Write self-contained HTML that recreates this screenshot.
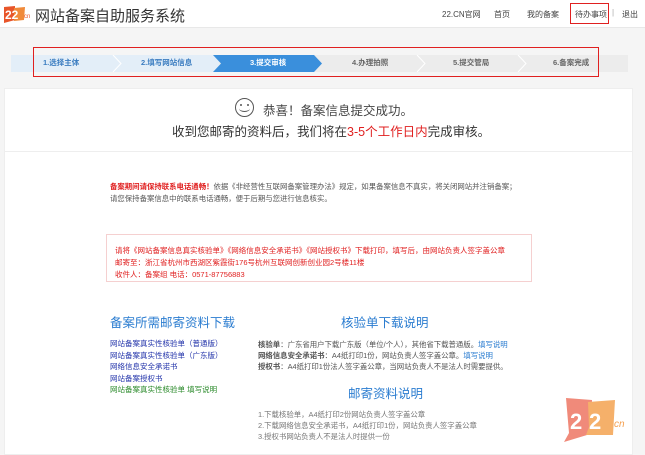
<!DOCTYPE html><html><head><meta charset="utf-8"><style>
*{margin:0;padding:0;box-sizing:border-box}
body{width:645px;height:455px;overflow:hidden;background:#f5f5f5;font-family:"Liberation Sans","Noto Sans CJK SC",sans-serif;position:relative;color:#666}
.a{position:absolute;white-space:nowrap}
.hdr{position:absolute;left:0;top:0;width:645px;height:28px;background:#fff;border-bottom:1px solid #e8e8e8}
.nav{font-size:8px;color:#444}
.step{position:absolute;top:54px;height:18px;font-size:7.5px;line-height:18px;font-weight:bold}
.box{position:absolute;left:4px;top:88px;width:629px;height:367px;background:#fff;border:1px solid #eee}
.red{color:#e02020}
.f7{font-size:7.4px}
.blue{color:#2a7cd0}
.lk{color:#2233aa;font-size:7.5px}
</style></head><body>
<div class="hdr"></div>
<svg class="a" style="left:3px;top:5px" width="30" height="19"><polygon points="1,2 12,1 12,15 1,18" fill="#e8552a"/><polygon points="11,3 22,2 21,15 11,16" fill="#f08a3a"/>
<text x="2" y="14" font-size="12" font-weight="bold" fill="#fff" font-family="Liberation Sans">22</text><text x="21" y="13" font-size="6" fill="#e8552a" font-family="Liberation Sans">cn</text></svg>
<div class="a" style="left:35px;top:5px;font-size:15px;color:#333">网站备案自助服务系统</div>
<div class="a nav" style="left:442px;top:9px">22.CN官网</div>
<div class="a nav" style="left:494px;top:9px">首页</div>
<div class="a nav" style="left:527px;top:9px">我的备案</div>
<div class="a nav" style="left:575px;top:9px">待办事项</div>
<div class="a" style="left:570px;top:3px;width:39px;height:21px;border:1.5px solid #e02020"></div>
<div class="a nav" style="left:612px;top:8px;color:#aaa">|</div>
<div class="a nav" style="left:622px;top:9px">退出</div>
<div class="a" style="left:11px;top:55px;width:617px;height:17px;background:#ececec"></div>
<div class="a" style="left:11px;top:55px;width:208px;height:17px;background:#e3eef8"></div>
<svg class="a" style="left:0;top:55px" width="645" height="17"><polygon points="213,0 314,0 322,8.5 314,17 213,17 221,8.5" fill="#3a8fdc"/>
<g fill="none" stroke="#fff" stroke-width="1"><polyline points="113,0 121,8.5 113,17"/><polyline points="417,0 425,8.5 417,17"/><polyline points="518,0 526,8.5 518,17"/></g></svg>
<div class="step" style="left:43px;color:#3a7cc0">1.选择主体</div>
<div class="step" style="left:141px;color:#3a7cc0">2.填写网站信息</div>
<div class="step" style="left:250px;color:#fff">3.提交审核</div>
<div class="step" style="left:352px;color:#666">4.办理拍照</div>
<div class="step" style="left:453px;color:#666">5.提交管局</div>
<div class="step" style="left:553px;color:#666">6.备案完成</div>
<div class="a" style="left:33px;top:47px;width:566px;height:30px;border:1.5px solid #e02020"></div>
<div class="box"></div>
<div class="a" style="left:4px;top:151px;width:629px;height:1px;background:#eee"></div>
<div class="a" style="left:235px;top:98px;width:19px;height:19px;border:1.3px solid #555;border-radius:50%"></div>
<div class="a" style="left:240px;top:104px;width:2px;height:2px;background:#555;border-radius:50%"></div>
<div class="a" style="left:247px;top:104px;width:2px;height:2px;background:#555;border-radius:50%"></div>
<div class="a" style="left:239px;top:105px;width:11px;height:7px;border-bottom:1.2px solid #555;border-radius:0 0 50% 50%"></div>
<div class="a" style="left:263px;top:100px;font-size:12.5px;color:#444">恭喜！备案信息提交成功。</div>
<div class="a" style="left:172px;top:121px;font-size:12.5px;color:#333">收到您邮寄的资料后，我们将在<span class="red">3-5个工作日内</span>完成审核。</div>
<div class="a f7" style="left:110px;top:181px;color:#555"><span class="red" style="font-weight:bold">备案期间请保持联系电话通畅！</span>依据《非经营性互联网备案管理办法》规定，如果备案信息不真实，将关闭网站并注销备案；</div>
<div class="a f7" style="left:110px;top:193px;color:#555">请您保持备案信息中的联系电话通畅，便于后期与您进行信息核实。</div>
<div class="a" style="left:106px;top:234px;width:426px;height:48px;border:1px solid #f5d0d0"></div>
<div class="a red" style="left:115px;top:245px;font-size:7.5px">请将《网站备案信息真实核验单》《网络信息安全承诺书》《网站授权书》下载打印，填写后，由网站负责人签字盖公章</div>
<div class="a red" style="left:115px;top:257px;font-size:7.5px">邮寄至：浙江省杭州市西湖区紫霞街176号杭州互联网创新创业园2号楼11楼</div>
<div class="a red" style="left:115px;top:269px;font-size:7.5px">收件人：备案组 电话：0571-87756883</div>
<div class="a blue" style="left:110px;top:312px;font-size:12.5px">备案所需邮寄资料下载</div>
<div class="a lk" style="left:110px;top:338px">网站备案真实性核验单（普通版）</div>
<div class="a lk" style="left:110px;top:350px">网站备案真实性核验单（广东版）</div>
<div class="a lk" style="left:110px;top:361px">网络信息安全承诺书</div>
<div class="a lk" style="left:110px;top:373px">网站备案授权书</div>
<div class="a" style="left:110px;top:384px;font-size:7.5px;color:#2a8a2a">网站备案真实性核验单 填写说明</div>
<div class="a blue" style="left:341px;top:312px;font-size:12.5px">核验单下载说明</div>
<div class="a f7" style="left:258px;top:339px;color:#555"><b>核验单</b>：广东省用户下载广东版（单位/个人），其他省下载普通版。<span class="blue">填写说明</span></div>
<div class="a f7" style="left:258px;top:350px;color:#555"><b>网络信息安全承诺书</b>：A4纸打印1份，网站负责人签字盖公章。<span class="blue">填写说明</span></div>
<div class="a f7" style="left:258px;top:361px;color:#555"><b>授权书</b>：A4纸打印1份法人签字盖公章，当网站负责人不是法人时需要提供。</div>
<div class="a blue" style="left:348px;top:383px;font-size:12.5px">邮寄资料说明</div>
<div class="a f7" style="left:258px;top:409px;color:#777">1.下载核验单，A4纸打印2份网站负责人签字盖公章</div>
<div class="a f7" style="left:258px;top:420px;color:#777">2.下载网络信息安全承诺书，A4纸打印1份，网站负责人签字盖公章</div>
<div class="a f7" style="left:258px;top:431px;color:#777">3.授权书网站负责人不是法人时提供一份</div>
<svg class="a" style="left:562px;top:395px" width="75" height="50"><polygon points="4,3 30,5 29,40 25,40 2,47 7,38" fill="#f08a7a"/><polygon points="26,7 53,5 51,40 24,40 27,32" fill="#f5b06a"/>
<text x="8" y="34" font-size="22" font-weight="bold" fill="#fff" font-family="Liberation Sans">2</text><text x="27" y="34" font-size="22" font-weight="bold" fill="#fff" font-family="Liberation Sans">2</text><text x="52" y="32" font-size="10" fill="#f5a050" font-family="Liberation Sans" font-style="italic">cn</text></svg>
</body></html>
